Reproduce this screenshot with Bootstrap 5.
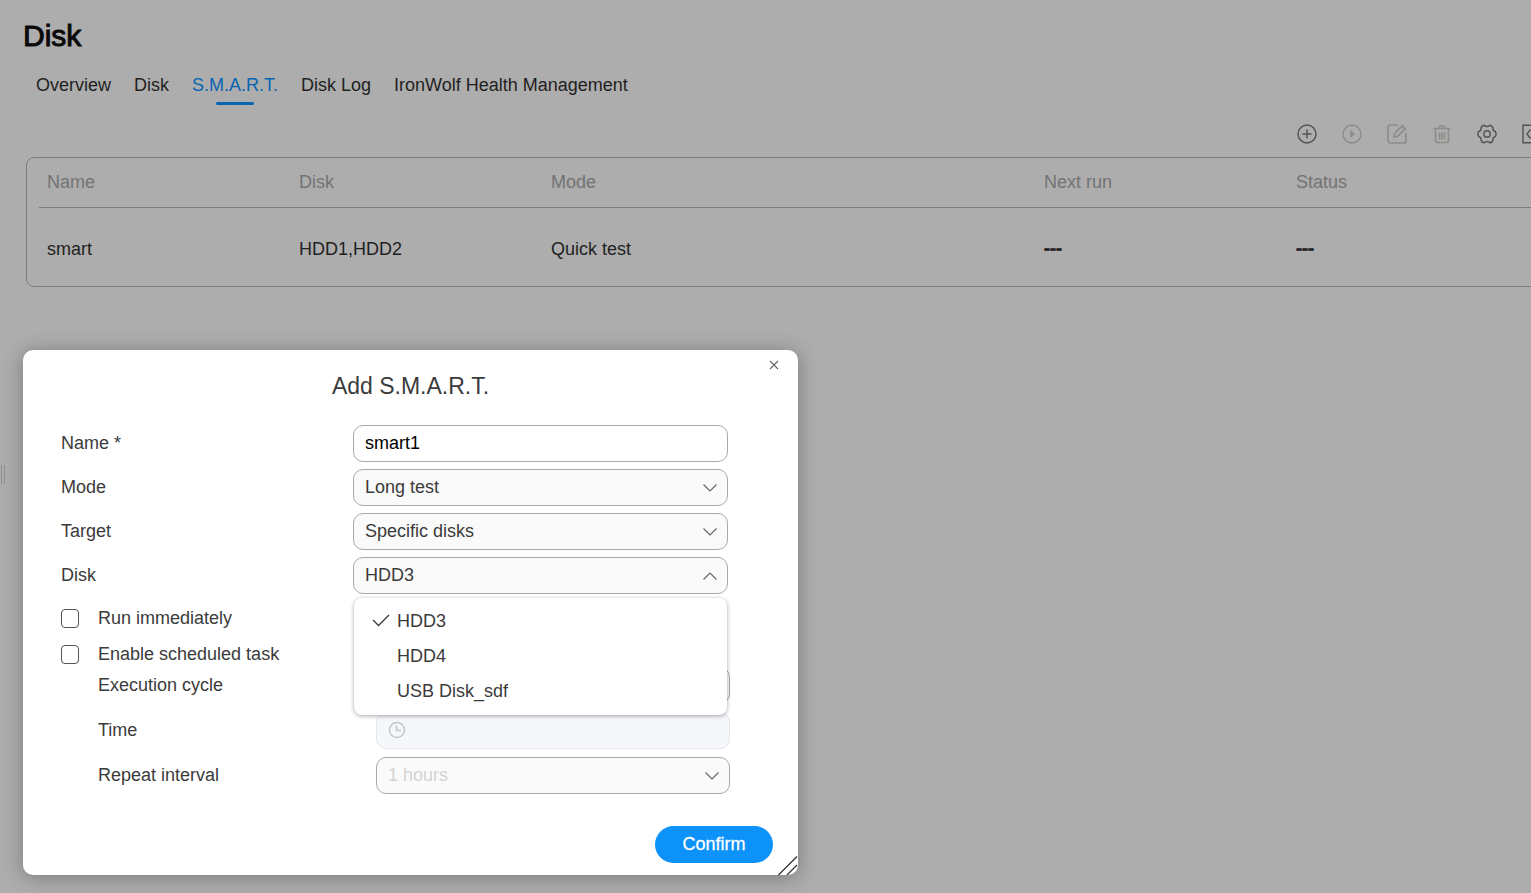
<!DOCTYPE html>
<html lang="en">
<head>
<meta charset="utf-8">
<meta name="viewport" content="width=device-width, initial-scale=1">
<title>Disk</title>
<link rel="stylesheet" href="https://cdn.jsdelivr.net/npm/bootstrap@5.3.0/dist/css/bootstrap.min.css">
<style>
  body { background: #adadad; color: #1f1f1f; font: 18px/24px "Liberation Sans", Arial, sans-serif; overflow-x: hidden; }
  .page-title { font-size: 30px; line-height: 36px; font-weight: 400; color: #0a0a0a; -webkit-text-stroke: 1px #0a0a0a; padding: 18px 0 0 23px; }
  .tab-bar { padding: 19px 36px 0; column-gap: 23px; }
  .tab-bar .nav-link { color: #1f1f1f; padding: 0 0 8px; position: relative; }
  .tab-bar .nav-link.active { color: #0865b3; }
  .tab-bar .nav-link.active::after { content: ""; position: absolute; left: 50%; bottom: 0; width: 38px; margin-left: -19px; height: 3px; border-radius: 2px; background: #0865b3; }
  /* the list is wider than the window and runs off its right edge */
  .wide-area { width: calc(100% - 4px); margin-left: 26px; }
  .toolbar { gap: 25px; padding: 19px 11px 13px 0; }
  .toolbar button { border: 0; background: none; padding: 0; width: 20px; height: 20px; color: #525252; display: flex; }
  .toolbar button:disabled { color: #8c8c89; }
  .toolbar svg { width: 20px; height: 20px; fill: none; stroke: currentColor; stroke-width: 1.4; }
  .list-box { border: 1px solid #7c7c7c; border-radius: 8px; padding: 0 12px; height: 130px; }
  .task-table { table-layout: fixed; width: 100%; }
  .task-table th { font-weight: 400; color: #737373; height: 49px; padding: 0 8px; border-bottom: 1px solid #7c7c7c; }
  .task-table td { height: 79px; padding: 5px 8px 0; }
  .task-table .no-value { -webkit-text-stroke: 1px #1f1f1f; }
  .task-table .w-std { width: 252px; }
  .dialog { width: calc(100% - 46px); max-width: 775px; margin: 63px 23px 18px; background: #fff; color: #3b3b3b; border-radius: 10px; box-shadow: 0 2px 20px rgba(0,0,0,.3); padding: 22px 25px 12px 38px; position: relative; }
  .dialog h2 { font-size: 23px; line-height: 28px; font-weight: 400; text-align: center; margin: 0 0 25px; padding-right: 13px; }
  .close-x { position: absolute; top: 9px; right: 18px; width: 12px; height: 12px; padding: 0; border: 0; background: none; display: flex; color: #666; }
  .fields { display: grid; row-gap: 7px; padding-right: 45px; }
  .field-row { display: grid; grid-template-columns: 1fr 375px; align-items: center; position: relative; }
  .field-row label { line-height: 24px; margin-bottom: 2px; }
  .ctl { height: 37px; border: 1px solid #a9a9a9; border-radius: 10px; padding: 0 11px; font-size: 18px; line-height: 24px; color: #000; background-color: #fff; }
  .ctl.form-select { padding: 0 36px 2px 11px; color: #3b3b3b; background-color: #fafafa; background-size: 16px 10px; background-position: right 9px center; background-image: url("data:image/svg+xml,%3Csvg xmlns='http://www.w3.org/2000/svg' viewBox='0 0 16 10'%3E%3Cpath d='M1.500 1.500L8 8L14.500 1.500' fill='none' stroke='%23666' stroke-width='1.200'/%3E%3C/svg%3E"); }
  .ctl.form-select.opened { background-image: url("data:image/svg+xml,%3Csvg xmlns='http://www.w3.org/2000/svg' viewBox='0 0 16 10'%3E%3Cpath d='M1.500 8.500L8 2L14.500 8.500' fill='none' stroke='%23666' stroke-width='1.200'/%3E%3C/svg%3E"); }
  .ctl.form-select:disabled { color: #d6d3cf; }
  .ctl.time-box:disabled { background: #f5f7fb; border-color: #e4e7ed; }
  .pick-list { position: absolute; z-index: 5; top: 41px; right: 1px; width: 373px; margin: 0; padding: 6px 0; list-style: none; background: #fff; border-radius: 8px; box-shadow: 0 1px 4px rgba(0,0,0,.35); }
  .pick-list button { display: flex; align-items: center; width: 100%; height: 35px; border: 0; background: none; padding: 0 0 2px 18px; color: #3b3b3b; gap: 7px; }
  .pick-list svg { width: 18px; height: 14px; flex: none; }
  .checks { display: grid; row-gap: 12px; padding: 12px 0 1px; }
  .check-row { display: flex; gap: 19px; }
  .check-row label { line-height: 24px; }
  .check-row .form-check-input { width: 18px; height: 19px; margin: 3px 0 0; border: 1px solid #555; border-radius: 4px; flex: none; }
  .sub-fields { display: grid; row-gap: 8px; padding: 0 43px 0 37px; }
  .sub-fields .field-row { grid-template-columns: 1fr 354px; }
  .clock-ico { position: absolute; left: 12px; top: 9px; width: 18px; height: 18px; }
  .btn-confirm { --bs-btn-bg: #0c92f8; --bs-btn-color: #fff; --bs-btn-hover-bg: #0a80dc; --bs-btn-hover-color: #fff; width: 118px; height: 37px; font-size: 18px; line-height: 24px; padding: 0 0 2px; border: 0; -webkit-text-stroke: 0.3px #fff; }
  .grip { position: absolute; right: 0; bottom: 0; width: 20px; height: 20px; }
  .side-handle { position: absolute; left: 1px; top: 465px; width: 4px; height: 19px; border: solid #8e8e8e; border-width: 0 1px; }
</style>
</head>
<body>
<main class="overflow-hidden">
  <h1 class="page-title m-0">Disk</h1>
  <nav class="nav tab-bar" aria-label="Disk sections">
    <a class="nav-link" href="#overview">Overview</a>
    <a class="nav-link" href="#disk">Disk</a>
    <a class="nav-link active" href="#smart" aria-current="page">S.M.A.R.T.</a>
    <a class="nav-link" href="#log">Disk Log</a>
    <a class="nav-link" href="#ironwolf">IronWolf Health Management</a>
  </nav>

  <div class="wide-area">
    <div class="toolbar d-flex justify-content-end">
      <button type="button" aria-label="Add"><svg viewBox="0 0 20 20"><circle cx="10" cy="10" r="9"/><path d="M10 5.500v9M5.500 10h9"/></svg></button>
      <button type="button" aria-label="Run" disabled><svg viewBox="0 0 20 20"><circle cx="10" cy="10" r="9"/><path d="M8.200 6v8l5-4z" fill="currentColor" stroke="none"/></svg></button>
      <button type="button" aria-label="Edit" disabled><svg viewBox="0 0 20 20"><path d="M11 1H3.500A2.500 2.500 0 0 0 1 3.500v13A2.500 2.500 0 0 0 3.500 19h13a2.500 2.500 0 0 0 2.500-2.500V9M7 13l.6-3.600 7.600-7.600 3 3-7.600 7.600z" stroke-width="1.700"/></svg></button>
      <button type="button" aria-label="Delete" disabled><svg viewBox="0 0 20 20"><path d="M1.500 4.500h17M7 4.500C7 .8 13 .8 13 4.500M3.500 4.500V17a1.500 1.500 0 0 0 1.500 1.500h10a1.500 1.500 0 0 0 1.500-1.500V4.500M7.500 8.500v7M10 8.500v7M12.500 8.500v7" stroke-width="1.600"/></svg></button>
      <button type="button" aria-label="Settings"><svg viewBox="0 0 20 20"><circle cx="10" cy="10" r="3.200"/><path d="M7.200 1.200Q10 3.800 12.800 1.200Q15.600 1.700 16 4.200Q15.600 6.800 18.200 7.300Q20 10 18.200 12.700Q15.600 13.200 16 15.800Q15.600 18.300 12.800 18.800Q10 16.200 7.200 18.800Q4.400 18.300 4 15.800Q4.400 13.200 1.800 12.700Q0 10 1.800 7.300Q4.400 6.800 4 4.200Q4.400 1.700 7.200 1.200Z"/></svg></button>
      <button type="button" aria-label="Logs"><svg viewBox="0 0 20 20"><path d="M1 1.200h18v17.600H1zM8.500 5.500L5 10l3.500 4.500M12 5.500l3.500 4.500-3.500 4.500"/></svg></button>
    </div>
    <div class="list-box">
      <table class="task-table">
        <colgroup><col class="w-std"><col class="w-std"><col><col class="w-std"><col class="w-std"></colgroup>
        <thead><tr><th scope="col">Name</th><th scope="col">Disk</th><th scope="col">Mode</th><th scope="col">Next run</th><th scope="col">Status</th></tr></thead>
        <tbody><tr><td>smart</td><td>HDD1,HDD2</td><td>Quick test</td><td class="no-value">---</td><td class="no-value">---</td></tr></tbody>
      </table>
    </div>
  </div>

  <section class="dialog" role="dialog" aria-labelledby="dlg-title">
    <button type="button" class="close-x" aria-label="Close"><svg width="12" height="12" viewBox="0 0 12 12" fill="none" stroke="currentColor" stroke-width="1.100"><path d="M2 2l8 8M10 2l-8 8"/></svg></button>
    <h2 id="dlg-title">Add S.M.A.R.T.</h2>
    <form>
      <div class="fields">
        <div class="field-row"><label for="f-name">Name *</label><input id="f-name" type="text" class="form-control ctl" value="smart1"></div>
        <div class="field-row"><label for="f-mode">Mode</label><select id="f-mode" class="form-select ctl"><option>Long test</option></select></div>
        <div class="field-row"><label for="f-target">Target</label><select id="f-target" class="form-select ctl"><option>Specific disks</option></select></div>
        <div class="field-row">
          <label for="f-disk">Disk</label><select id="f-disk" class="form-select ctl opened"><option>HDD3</option></select>
          <ul class="pick-list">
            <li><button type="button"><svg viewBox="0 0 18 14" fill="none" stroke="#3b3b3b" stroke-width="1.300"><path d="M1 6l5.500 5.500L17 1"/></svg>HDD3</button></li>
            <li><button type="button"><svg viewBox="0 0 18 14"></svg>HDD4</button></li>
            <li><button type="button"><svg viewBox="0 0 18 14"></svg>USB Disk_sdf</button></li>
          </ul>
        </div>
      </div>
      <div class="checks">
        <div class="check-row"><input id="c-run" type="checkbox" class="form-check-input"><label for="c-run">Run immediately</label></div>
        <div class="check-row"><input id="c-sched" type="checkbox" class="form-check-input"><label for="c-sched">Enable scheduled task</label></div>
      </div>
      <div class="sub-fields">
        <div class="field-row"><label for="s-cycle">Execution cycle</label><select id="s-cycle" class="form-select ctl" disabled><option></option></select></div>
        <div class="field-row"><label for="s-time">Time</label>
          <div class="position-relative"><input id="s-time" type="text" class="form-control ctl time-box" disabled>
            <svg class="clock-ico" viewBox="0 0 18 18" fill="none" stroke="#c3c6ce" stroke-width="1.500"><circle cx="9" cy="9" r="7.500"/><path d="M8.500 4.500v5h4.500"/></svg></div>
        </div>
        <div class="field-row"><label for="s-repeat">Repeat interval</label><select id="s-repeat" class="form-select ctl" disabled><option>1 hours</option></select></div>
      </div>
      <div class="d-flex justify-content-end mt-4 pt-2"><button type="button" class="btn btn-confirm rounded-pill">Confirm</button></div>
    </form>
    <svg class="grip" viewBox="0 0 20 20" fill="none" stroke="#333" stroke-width="1.300" aria-hidden="true"><path d="M0.500 20L19 1.500M9 20L19 10"/></svg>
  </section>
</main>
<div class="side-handle" aria-hidden="true"></div>
<script src="https://cdn.jsdelivr.net/npm/bootstrap@5.3.0/dist/js/bootstrap.bundle.min.js"></script>
</body>
</html>
